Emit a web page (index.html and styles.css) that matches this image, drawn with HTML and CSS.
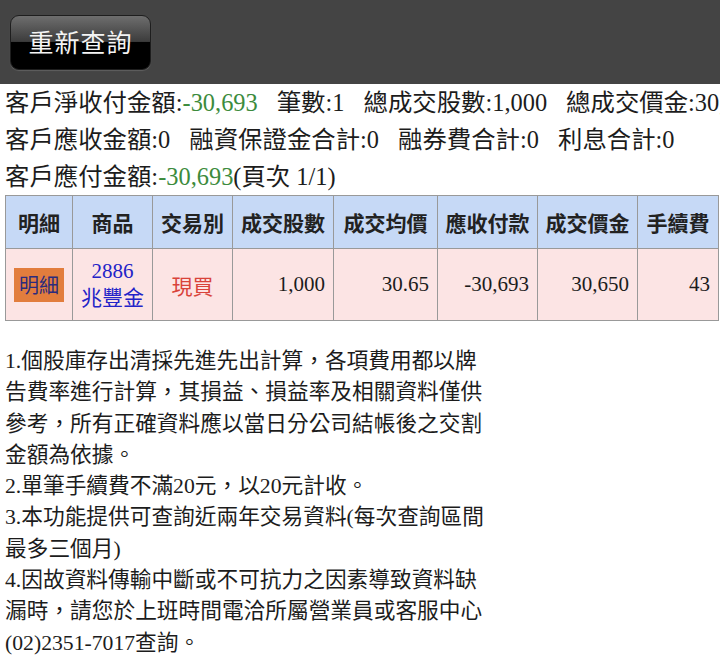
FILE: index.html
```html
<!DOCTYPE html>
<html lang="zh-Hant">
<head>
  <meta charset="UTF-8" />
  <meta name="viewport" content="width=device-width, initial-scale=1.0" />
  <title>當日交易明細</title>
  <link rel="stylesheet" href="styles.css">
</head>
<body>
  <div class="topbar">
    <button class="requery">重新查詢</button>
  </div>

  <div class="summary">
    <div class="line">客戶淨收付金額:<span class="neg">-30,693</span><span class="gap">筆數:1</span><span class="gap">總成交股數:1,000</span><span class="gap">總成交價金:30,650</span></div>
    <div class="line">客戶應收金額:0<span class="gap">融資保證金合計:0</span><span class="gap">融券費合計:0</span><span class="gap">利息合計:0</span></div>
    <div class="line">客戶應付金額:<span class="neg">-30,693</span>(頁次 1/1)</div>
  </div>

  <table class="deals">
    <colgroup>
      <col style="width:67px"><col style="width:80px"><col style="width:80px"><col style="width:101px">
      <col style="width:104px"><col style="width:100px"><col style="width:100px"><col style="width:81px">
    </colgroup>
    <thead>
      <tr>
        <th>明細</th>
        <th>商品</th>
        <th>交易別</th>
        <th>成交股數</th>
        <th>成交均價</th>
        <th>應收付款</th>
        <th>成交價金</th>
        <th>手續費</th>
      </tr>
    </thead>
    <tbody>
      <tr>
        <td class="center"><span class="detail">明細</span></td>
        <td class="center stock">2886<br>兆豐金</td>
        <td class="center buy">現買</td>
        <td class="num">1,000</td>
        <td class="num">30.65</td>
        <td class="num">-30,693</td>
        <td class="num">30,650</td>
        <td class="num">43</td>
      </tr>
    </tbody>
  </table>

  <div class="notes">
    <p>1.個股庫存出清採先進先出計算，各項費用都以牌<br>告費率進行計算，其損益、損益率及相關資料僅供<br>參考，所有正確資料應以當日分公司結帳後之交割<br>金額為依據。</p>
    <p>2.單筆手續費不滿20元，以20元計收。</p>
    <p>3.本功能提供可查詢近兩年交易資料(每次查詢區間<br>最多三個月)</p>
    <p>4.因故資料傳輸中斷或不可抗力之因素導致資料缺<br>漏時，請您於上班時間電洽所屬營業員或客服中心<br>(02)2351-7017查詢。</p>
  </div>
</body>
</html>
```

FILE: styles.css
```css
body { margin: 0; background: #fff; color: #1c1c1c; font-family: "Liberation Serif", "Noto Sans CJK TC", serif; overflow: hidden; }
.topbar { height: 84px; background: #444; padding: 15px 0 0 10px; box-sizing: border-box; }
.requery { width: 141px; height: 55px; border: 1px solid #1e1e1e; border-radius: 9px; color: #f4f4f4; font-family: "Noto Sans CJK TC", sans-serif; font-size: 25px; letter-spacing: 1px; background: linear-gradient(to bottom, #6e6e6e 0%, #3c3c3c 48%, #000 50%, #000 100%); box-shadow: 0 1px 1px rgba(255,255,255,0.15); padding: 0 0 3px; }
.summary { padding-left: 5px; font-size: 24.4px; line-height: 37px; white-space: nowrap; overflow: hidden; }
.neg { color: #3c8b3c; }
.gap { margin-left: 19px; }
.deals { margin-left: 5px; width: 713px; border-collapse: collapse; table-layout: fixed; }
.deals th, .deals td { border: 1px solid #999; padding: 0; }
.deals th { height: 52px; background: #c6d9f6; font-family: "Noto Sans CJK TC", sans-serif; font-size: 21px; font-weight: 700; color: #222; }
.deals td { height: 71px; background: #fce4e4; font-size: 21px; }
.center { text-align: center; }
.num { text-align: right; padding-right: 8px !important; }
.detail { display: inline-block; width: 50px; height: 34px; line-height: 34px; background: #e27d3d; color: #2b2b7d; font-family: "Noto Sans CJK TC", sans-serif; font-size: 20px; }
.stock { color: #2323c8; line-height: 27px; }
.buy { color: #d9433a; font-family: "Noto Sans CJK TC", sans-serif; font-size: 21px; }
.notes { margin-top: 25px; padding-left: 5px; font-size: 21.7px; line-height: 31.3px; white-space: nowrap; color: #1c1c1c; }
.notes p { margin: 0; }
```
